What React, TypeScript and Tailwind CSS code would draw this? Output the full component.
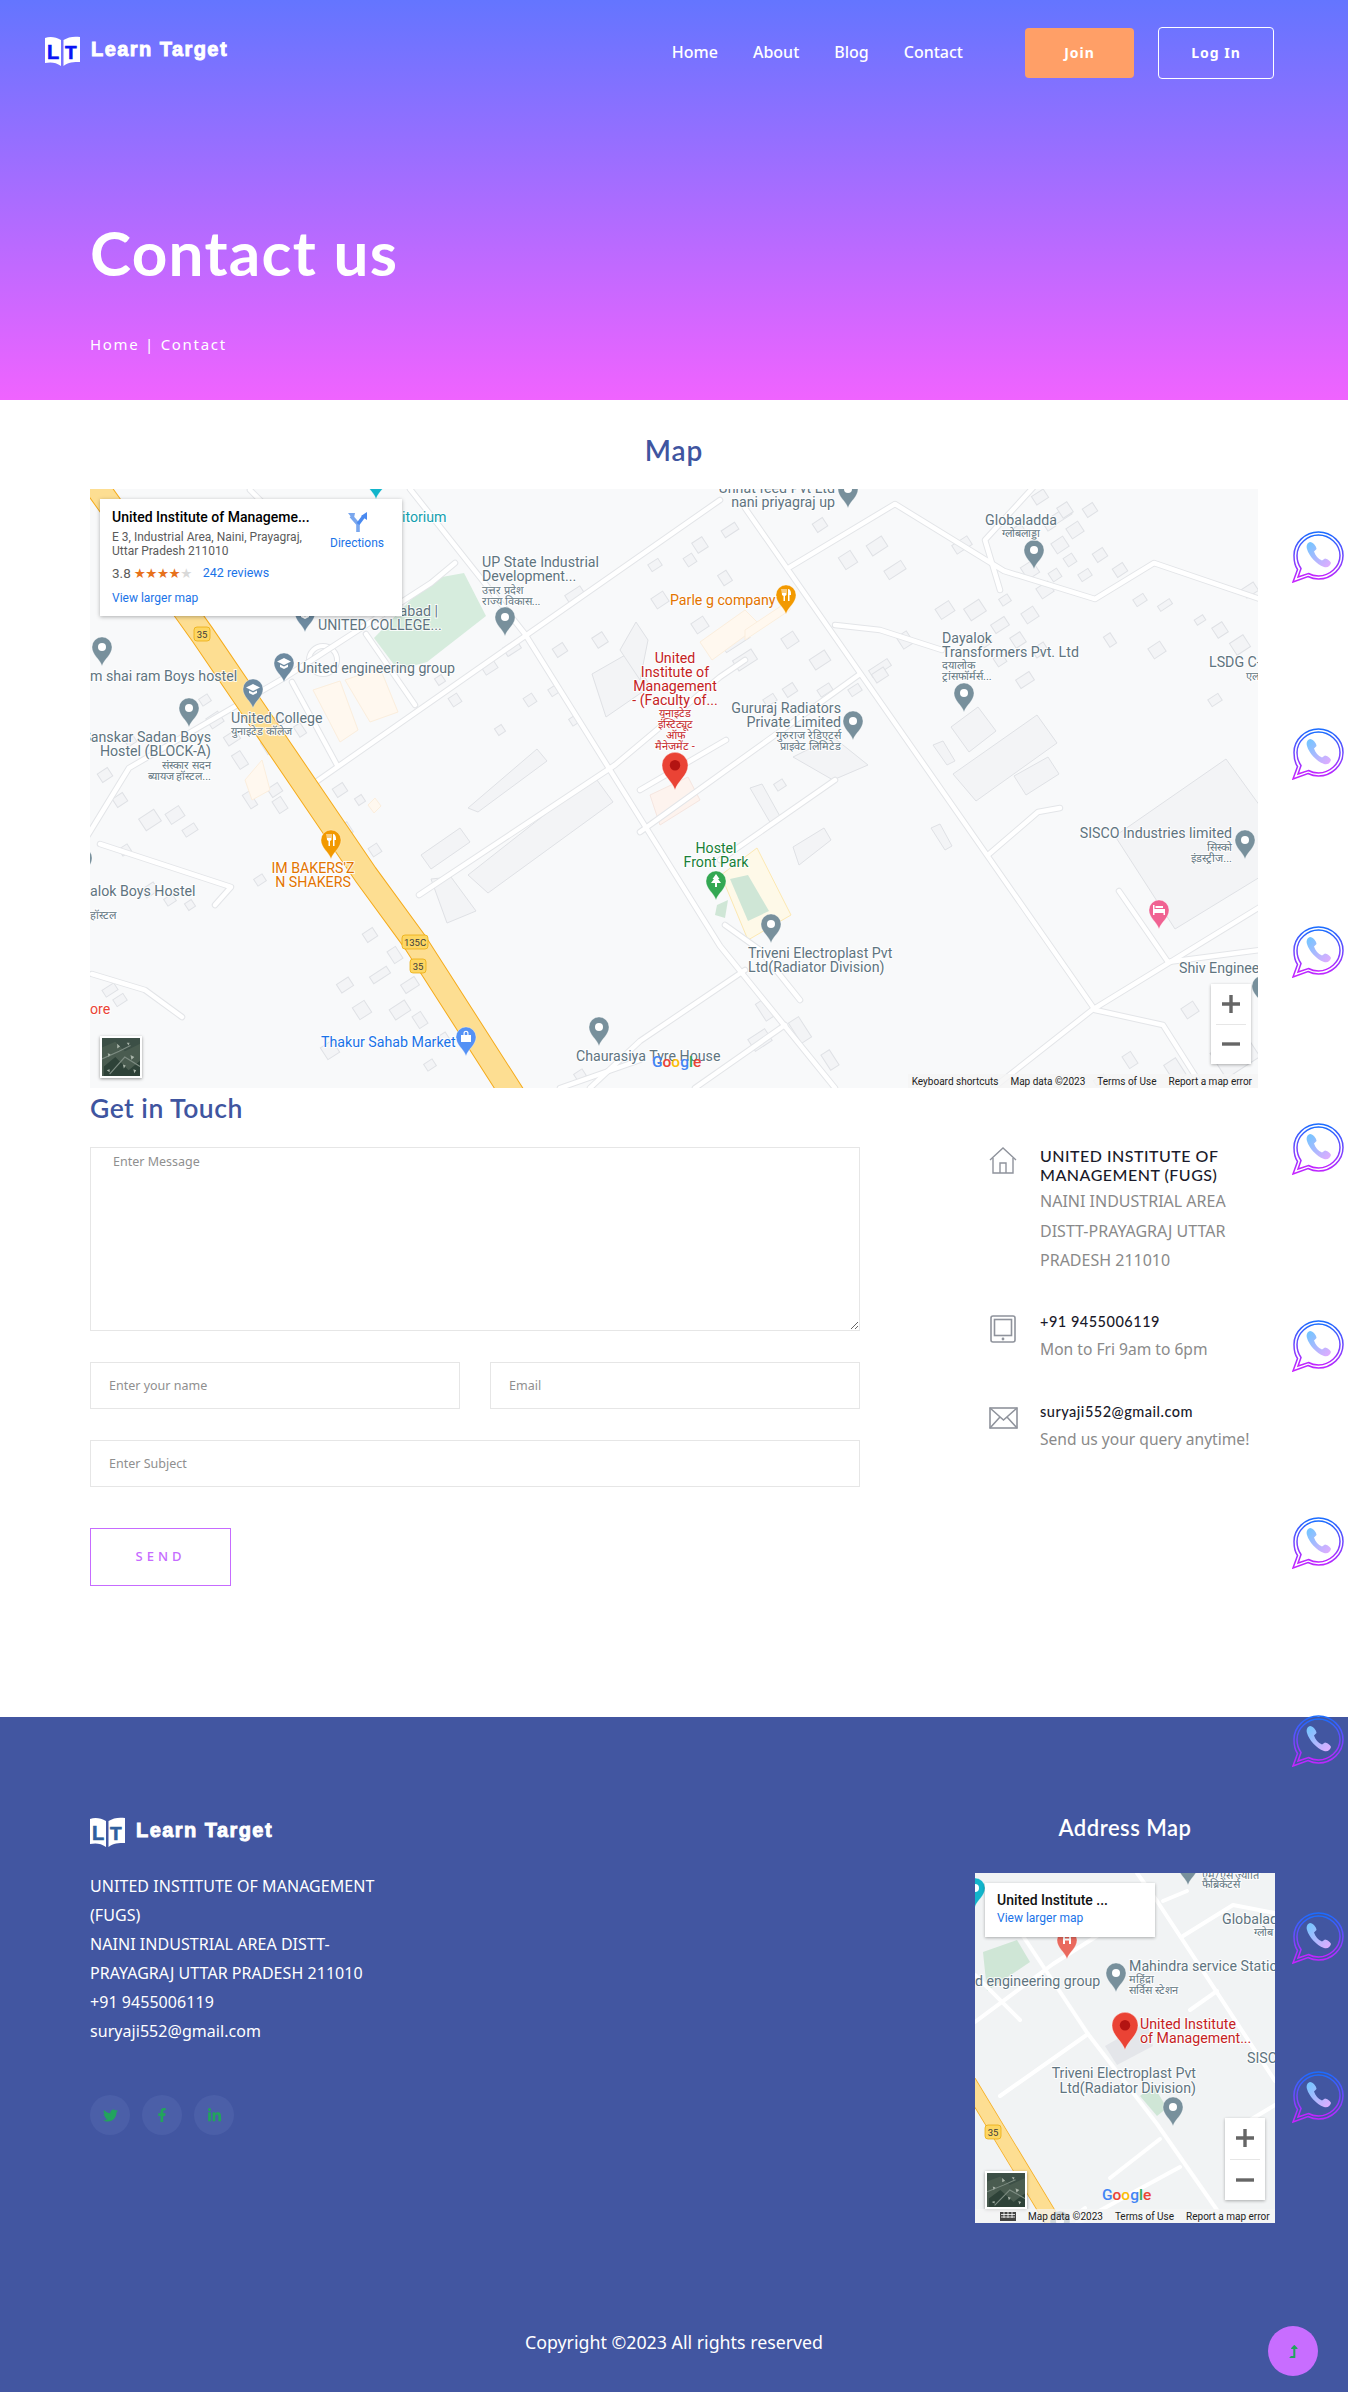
import React from "react";
import { FaTwitter, FaFacebookF, FaLinkedinIn, FaLevelUpAlt } from "react-icons/fa";

const muli = "[font-family:'Noto_Sans',sans-serif]";
const head = "[font-family:Lato,sans-serif]";
const roboto = "[font-family:Roboto,sans-serif]";

type P = [number, number];
const pts = (a: P[]) => a.map((p) => p.join(",")).join(" ");

function Pin({ x, y, c = "#78909c", big = false, dot = "#fff", g = "" }: { x: number; y: number; c?: string; big?: boolean; dot?: string; g?: string }) {
  const s = big ? 1.3 : 1;
  return (
    <g transform={`translate(${x} ${y}) scale(${s})`}>
      <path d="M0 0C-2-7-10-11-10-19A10 10 0 0 1 10-19C10-11 2-7 0 0Z" fill={c} stroke="#fff" strokeOpacity="0.5" strokeWidth="0.6" />
      {g ? <path d={g} fill="#fff" /> : <circle cx="0" cy="-19" r="4" fill={dot} />}
    </g>
  );
}

const gFork = "M-4.500-25h1v4h1v-4h1v4h1v-4h1v6l-1.500 1V-13h-1.500v-5l-1.500-1ZM2-25c2 0 3 2 3 5v1H3.500v6H2Z";
const gCap = "M0-24L7-20.500L0-17L-7-20.500ZM-4-17.500L0-15.500L4-17.500V-15L0-13L-4-15Z";
const gTree = "M0-26L3.500-21H2L5-17H1V-13H-1V-17H-5L-2-21H-3.500Z";
const gBed = "M-6-24H-4.500V-20H6V-14H4.500V-16H-4.500V-14H-6ZM-3.500-23H4V-21H-3.500Z";
const gBag = "M-5-21H5V-14H-5ZM-2.500-21V-23C-2.500-26 2.500-26 2.500-23V-21H1.300V-23C1.300-24.500-1.300-24.500-1.300-23V-21Z";
const gH = "M-4-24H-2V-20.500H2V-24H4V-15H2V-18.500H-2V-15H-4Z";

function Label({ x, y, t, c = "#5f7480", s = 14.2, a = "start", w = 400 }: { x: number; y: number; t: string; c?: string; s?: number; a?: "start" | "middle" | "end"; w?: number }) {
  return (
    <text x={x} y={y} fill={c} fontSize={s} fontWeight={w} textAnchor={a} stroke="#fff" strokeWidth="2" strokeOpacity="0.85" className="[paint-order:stroke]">
      {t}
    </text>
  );
}

function Shield({ x, y, t, wide = false }: { x: number; y: number; t: string; wide?: boolean }) {
  const w = wide ? 26 : 16;
  return (
    <g>
      <rect x={x - w / 2} y={y - 7} width={w} height={14} rx="3" fill="#fdd663" stroke="#e8a800" strokeWidth="0.7" />
      <text x={x} y={y + 3.5} fontSize="9.5" fill="#3c3c3c" textAnchor="middle">{t}</text>
    </g>
  );
}

const roads1: P[][] = [
  [[745, 508], [1095, 1010], [1163, 1025], [1203, 1088]],
  [[410, 489], [525, 634], [720, 946], [835, 1088]],
  [[313, 784], [720, 500]],
  [[790, 567], [895, 504], [1004, 571], [1095, 599], [1154, 563], [1260, 599]],
  [[419, 895], [615, 765], [720, 677], [745, 660]],
  [[640, 832], [860, 674]],
  [[640, 790], [726, 740]],
  [[988, 855], [1038, 812], [1060, 808]],
  [[993, 1088], [1092, 1010], [1260, 907]],
  [[1119, 891], [1168, 962], [1260, 950]],
  [[745, 970], [640, 1041], [590, 1088]],
  [[785, 1025], [695, 1088]],
  [[100, 844], [231, 887], [215, 905]],
  [[88, 835], [129, 768], [284, 678], [431, 583], [455, 563]],
  [[92, 974], [145, 990], [182, 1017]],
  [[366, 634], [415, 705]],
  [[292, 682], [337, 765]],
  [[835, 625], [880, 630], [942, 650]],
  [[1000, 590], [985, 540], [1040, 480]],
  [[640, 1060], [560, 1088]],
  [[250, 490], [280, 520], [320, 610]],
  [[835, 780], [720, 860]],
  [[725, 925], [760, 950], [800, 1000]],
];

const blds1: P[][] = [
  [[1115, 836], [1226, 759], [1260, 806], [1260, 877], [1175, 929]],
  [[951, 727], [978, 707], [996, 731], [969, 752]],
  [[953, 774], [1037, 715], [1057, 743], [976, 801]],
  [[1014, 776], [1048, 757], [1059, 774], [1026, 795]],
  [[933, 745], [943, 741], [955, 761], [947, 765]],
  [[931, 828], [940, 824], [952, 846], [945, 850]],
  [[793, 757], [833, 737], [868, 765], [833, 780]],
  [[750, 788], [762, 784], [782, 820], [771, 824]],
  [[793, 847], [824, 828], [831, 840], [799, 865]],
  [[468, 808], [537, 749], [547, 761], [478, 812]],
  [[468, 875], [594, 776], [613, 802], [488, 893]],
  [[421, 855], [460, 828], [470, 842], [431, 869]],
  [[431, 879], [451, 877], [476, 911], [447, 923]],
  [[592, 674], [627, 654], [651, 686], [606, 717]],
  [[636, 622], [648, 640], [640, 680], [620, 650]],
];

const small: [number, number, number, number][] = [
  [1040, 497, 14, 10], [1062, 515, 18, 9], [962, 545, 18, 10], [877, 546, 18, 12], [895, 570, 20, 10],
  [820, 525, 12, 10], [848, 560, 14, 14], [975, 610, 18, 14], [1000, 625, 16, 10], [1030, 615, 14, 12],
  [1065, 510, 12, 12], [1075, 530, 14, 12], [1090, 510, 12, 10], [1100, 555, 12, 10], [1120, 570, 12, 10],
  [1060, 545, 14, 12], [1045, 590, 14, 12], [1030, 570, 14, 14], [1018, 640, 12, 12],
  [1040, 650, 14, 10], [1157, 650, 14, 12], [1240, 645, 16, 14], [1220, 630, 12, 12], [1140, 600, 12, 8],
  [1165, 605, 14, 6], [880, 668, 22, 8], [880, 675, 14, 10], [820, 660, 18, 12], [790, 640, 14, 12],
  [735, 640, 28, 12], [745, 660, 22, 12], [700, 625, 14, 12], [780, 785, 10, 8], [945, 610, 16, 12],
  [725, 578, 10, 12], [730, 530, 16, 8], [700, 545, 12, 12], [660, 600, 14, 12], [600, 640, 12, 12],
  [575, 595, 18, 10], [560, 650, 12, 10], [512, 648, 16, 10], [490, 668, 14, 8],
  [150, 820, 18, 14], [175, 815, 16, 12], [120, 800, 12, 10], [105, 775, 12, 10], [190, 830, 14, 8],
  [232, 738, 14, 10], [215, 720, 14, 12], [270, 745, 14, 14], [240, 760, 10, 16], [275, 790, 12, 10],
  [250, 800, 8, 16], [280, 805, 10, 14], [300, 780, 12, 12], [340, 790, 12, 10], [360, 800, 8, 8],
  [395, 955, 10, 14], [370, 935, 12, 10], [380, 975, 20, 8], [410, 985, 16, 10], [345, 985, 14, 10],
  [362, 1010, 14, 14], [420, 1020, 10, 14], [442, 1040, 14, 10], [400, 1010, 18, 12], [330, 1050, 14, 14],
  [430, 1065, 10, 8], [580, 1075, 10, 8], [110, 990, 14, 8], [120, 1000, 12, 8],
  [150, 890, 14, 10], [170, 900, 10, 8], [260, 880, 10, 8], [190, 905, 8, 8], [800, 1030, 12, 24],
  [765, 1010, 10, 20], [830, 1060, 10, 18], [1130, 1060, 10, 14], [1190, 1010, 14, 12], [1100, 1080, 12, 6],
  [1235, 1055, 40, 30], [1175, 1070, 14, 20], [760, 1040, 20, 14],
  [1050, 525, 10, 8], [1070, 560, 10, 10], [1085, 575, 12, 8], [1055, 575, 10, 10], [1020, 530, 8, 10],
  [1005, 600, 10, 8], [985, 640, 10, 12], [1000, 660, 10, 10], [1025, 680, 16, 10], [905, 640, 12, 14],
  [855, 690, 12, 8], [825, 690, 14, 8], [790, 690, 12, 10], [770, 700, 12, 8], [1215, 700, 12, 8],
  [1110, 640, 8, 12], [1200, 620, 10, 6], [1250, 590, 14, 10], [690, 560, 10, 10], [655, 565, 12, 8],
  [130, 740, 10, 10], [125, 850, 10, 8], [205, 700, 10, 8], [280, 720, 10, 10], [300, 730, 8, 12],
  [320, 800, 8, 10], [345, 830, 12, 12], [375, 850, 10, 10], [455, 700, 10, 10], [440, 680, 8, 8],
  [530, 700, 10, 10], [500, 730, 8, 8], [575, 720, 10, 8], [555, 690, 12, 8],
];

const cream: P[][] = [
  [[313, 690], [340, 681], [358, 730], [340, 742]],
  [[345, 680], [380, 668], [398, 712], [370, 722]],
  [[245, 780], [262, 760], [270, 790], [252, 800]],
  [[368, 805], [375, 798], [381, 806], [374, 813]],
  [[700, 642], [745, 610], [760, 625], [712, 660]],
  [[745, 640], [790, 610], [790, 600], [745, 630]],
];

function Zoomer({ cls }: { cls: string }) {
  return (
    <div className={`absolute bg-white shadow-[0_1px_3px_rgba(0,0,0,0.3)] flex flex-col items-center justify-between ${cls}`}>
      <div className="flex-1 flex items-center justify-center w-full">
        <svg width="18" height="18" viewBox="0 0 18 18"><path d="M9 0V18M0 9H18" stroke="#666" strokeWidth="3.4" /></svg>
      </div>
      <div className="w-[30px] h-px bg-[#e6e6e6]" />
      <div className="flex-1 flex items-center justify-center w-full">
        <svg width="18" height="18" viewBox="0 0 18 18"><path d="M0 9H18" stroke="#666" strokeWidth="3.4" /></svg>
      </div>
    </div>
  );
}

function Sat({ cls }: { cls: string }) {
  return (
    <div className={`absolute border-2 border-white shadow-[0_1px_3px_rgba(0,0,0,0.4)] ${cls}`}>
      <svg width="100%" height="100%" viewBox="0 0 40 40" preserveAspectRatio="none" className="block">
        <rect width="40" height="40" fill="#4a5c50" />
        <path d="M0 10L14 4L24 14L40 6V0H0Z" fill="#3c4f46" />
        <path d="M2 30L14 20L28 34L40 24V40H2Z" fill="#2e4238" />
        <path d="M0 22L18 14L30 8M8 38L24 20L40 30" stroke="#7d8c82" strokeWidth="1.2" fill="none" />
        <path d="M16 6l3 3-3 2zM30 18l4 2-3 3zM6 16l3 1-2 3zM22 28l3 1-2 3zM33 33l3 1-2 3zM5 34l3-1 0 3zM26 5l3 0-1 3z" fill="#a9b4a9" />
      </svg>
    </div>
  );
}

function GoogleMark({ cls }: { cls: string }) {
  return (
    <div className={`absolute ${roboto} font-medium text-[15.5px] leading-none ${cls}`}>
      <span className="text-[#4285f4]">G</span>
      <span className="text-[#ea4335]">o</span>
      <span className="text-[#fbbc05]">o</span>
      <span className="text-[#4285f4]">g</span>
      <span className="text-[#34a853]">l</span>
      <span className="text-[#ea4335]">e</span>
    </div>
  );
}

function MainMap() {
  return (
    <div className="relative mx-[90px] h-[599px] bg-[#f8f9fa] overflow-hidden">
      <svg viewBox="90 489 1170 599" width="1170" height="599" className={`block ${roboto}`}>
        {blds1.map((b, i) => (
          <polygon key={i} points={pts(b)} fill="#f3f4f6" stroke="#dfe1e5" strokeWidth="1" />
        ))}
        {small.map(([x, y, w, h], i) => (
          <rect key={i} x={x - w / 2} y={y - h / 2} width={w} height={h} transform={`rotate(-33 ${x} ${y})`} fill="#f3f4f6" stroke="#dfe1e5" strokeWidth="1" />
        ))}
        <polygon points={pts([[374, 638], [431, 579], [464, 573], [486, 616], [427, 662], [398, 670]])} fill="#d6ecdd" />
        <polygon points={pts([[721, 875], [757, 848], [791, 915], [748, 940]])} fill="#fef9e8" stroke="#fce8b2" />
        <polygon points={pts([[730, 879], [748, 875], [769, 911], [748, 921]])} fill="#cfe6d6" />
        <polygon points={pts([[717, 905], [728, 900], [725, 918], [715, 915]])} fill="#cfe6d6" />
        <polygon points={pts([[650, 795], [688, 777], [700, 800], [660, 825]])} fill="#fdf3ee" stroke="#f5e6e0" />
        {cream.map((b, i) => (
          <polygon key={i} points={pts(b)} fill="#fff8ef" stroke="#fbeedd" />
        ))}
        <circle cx="323" cy="660" r="14" fill="none" stroke="#e3e5e8" strokeWidth="6" />
        <circle cx="323" cy="660" r="14" fill="none" stroke="#fff" strokeWidth="4" />
        {roads1.map((r, i) => (
          <polyline key={`o${i}`} points={pts(r)} fill="none" stroke="#e3e5e8" strokeWidth="6.5" strokeLinecap="round" strokeLinejoin="round" />
        ))}
        {roads1.map((r, i) => (
          <polyline key={`r${i}`} points={pts(r)} fill="none" stroke="#fff" strokeWidth="4.500" strokeLinecap="round" strokeLinejoin="round" />
        ))}
        <polyline points="92,480 202,634 366,875 415,942 513,1095" fill="none" stroke="#f5ab1c" strokeWidth="25" />
        <polyline points="92,480 202,634 366,875 415,942 513,1095" fill="none" stroke="#fdde92" strokeWidth="23" />
        <Shield x={202} y={634} t="35" />
        <Shield x={415} y={942} t="135C" wide />
        <Shield x={418} y={966} t="35" />

        <Pin x={376} y={499} c="#12b5cb" />
        <Pin x={505} y={636} />
        <Pin x={102} y={666} />
        <Pin x={189} y={727} />
        <Pin x={253} y={708} c="#6d8aa0" g={gCap} />
        <Pin x={284} y={682} c="#6d8aa0" g={gCap} />
        <Pin x={305} y={632} c="#6d8aa0" g={gCap} />
        <Pin x={331} y={859} c="#f29900" g={gFork} />
        <Pin x={82} y={877} />
        <Pin x={466} y={1056} c="#5491f5" g={gBag} />
        <Pin x={599} y={1046} />
        <Pin x={786} y={614} c="#f29900" g={gFork} />
        <Pin x={848} y={508} />
        <Pin x={1034} y={569} />
        <Pin x={964} y={712} />
        <Pin x={853} y={740} />
        <Pin x={716} y={900} c="#34a853" g={gTree} />
        <Pin x={771} y={943} />
        <Pin x={1245} y={859} />
        <Pin x={1159} y={929} c="#f06292" g={gBed} />
        <Pin x={1262} y={1005} />
        <Pin x={675} y={790} c="#ea4335" big dot="#b31412" />

        <Label x={402} y={522} t="itorium" c="#129eaf" />
        <Label x={482} y={567} t="UP State Industrial" />
        <Label x={482} y={581} t="Development..." />
        <Label x={482} y={594} t="उत्तर प्रदेश" s={11} />
        <Label x={482} y={605} t="राज्य विकास..." s={11} />
        <Label x={670} y={605} t="Parle g company" c="#e37400" />
        <Label x={318} y={616} t="UCEM - Allahabad |" />
        <Label x={318} y={630} t="UNITED COLLEGE..." />
        <Label x={297} y={673} t="United engineering group" />
        <Label x={90} y={681} t="m shai ram Boys hostel" />
        <Label x={231} y={723} t="United College" />
        <Label x={231} y={735} t="युनाइटेड कॉलेज" s={11} />
        <Label x={211} y={742} t="Sanskar Sadan Boys" a="end" />
        <Label x={211} y={756} t="Hostel (BLOCK-A)" a="end" />
        <Label x={211} y={769} t="संस्कार सदन" s={11} a="end" />
        <Label x={211} y={780} t="ब्यायज हॉस्टल..." s={11} a="end" />
        <Label x={313} y={873} t="IM BAKERS'Z" c="#e37400" a="middle" />
        <Label x={313} y={887} t="N SHAKERS" c="#e37400" a="middle" />
        <Label x={90} y={896} t="alok Boys Hostel" />
        <Label x={90} y={919} t="हॉस्टल" s={11} />
        <Label x={90} y={1014} t="ore" c="#ea4335" />
        <Label x={321} y={1047} t="Thakur Sahab Market" c="#1a73e8" />
        <Label x={576} y={1061} t="Chaurasiya Tyre House" />
        <Label x={675} y={663} t="United" c="#c5221f" a="middle" />
        <Label x={675} y={677} t="Institute of" c="#c5221f" a="middle" />
        <Label x={675} y={691} t="Management" c="#c5221f" a="middle" />
        <Label x={675} y={705} t="- (Faculty of..." c="#c5221f" a="middle" />
        <Label x={675} y={717} t="यूनाइटेड" c="#c5221f" s={11} a="middle" />
        <Label x={675} y={728} t="इंस्टिट्यूट" c="#c5221f" s={11} a="middle" />
        <Label x={675} y={739} t="ऑफ" c="#c5221f" s={11} a="middle" />
        <Label x={675} y={750} t="मैनेजमेंट -" c="#c5221f" s={11} a="middle" />
        <Label x={716} y={853} t="Hostel" c="#188038" a="middle" />
        <Label x={716} y={867} t="Front Park" c="#188038" a="middle" />
        <Label x={835} y={493} t="Unnat feed Pvt Ltd" a="end" />
        <Label x={835} y={507} t="nani priyagraj up" a="end" />
        <Label x={1021} y={525} t="Globaladda" a="middle" />
        <Label x={1021} y={537} t="ग्लोबलाड्डा" s={11} a="middle" />
        <Label x={942} y={643} t="Dayalok" />
        <Label x={942} y={657} t="Transformers Pvt. Ltd" />
        <Label x={942} y={669} t="दयालोक" s={11} />
        <Label x={942} y={680} t="ट्रांसफॉर्मर्स..." s={11} />
        <Label x={841} y={713} t="Gururaj Radiators" a="end" />
        <Label x={841} y={727} t="Private Limited" a="end" />
        <Label x={841} y={739} t="गुरुराज रेडिएटर्स" s={11} a="end" />
        <Label x={841} y={750} t="प्राइवेट लिमिटेड" s={11} a="end" />
        <Label x={748} y={958} t="Triveni Electroplast Pvt" />
        <Label x={748} y={972} t="Ltd(Radiator Division)" />
        <Label x={1232} y={838} t="SISCO Industries limited" a="end" />
        <Label x={1232} y={851} t="सिस्को" s={11} a="end" />
        <Label x={1232} y={862} t="इंडस्ट्रीज..." s={11} a="end" />
        <Label x={1209} y={667} t="LSDG C-" />
        <Label x={1246} y={680} t="एल" s={11} />
        <Label x={1179} y={973} t="Shiv Engineer" />
      </svg>

      <div className={`absolute left-[10px] top-[10px] w-[302px] h-[117px] bg-white shadow-[0_1px_4px_rgba(0,0,0,0.3)] ${roboto}`}>
        <div className="absolute left-[12px] top-[8px] text-[14px] leading-[20px] font-medium text-black whitespace-nowrap">United Institute of Manageme...</div>
        <div className="absolute left-[12px] top-[31px] text-[12px] leading-[14px] text-[#5b5b5b] whitespace-nowrap">
          E 3, Industrial Area, Naini, Prayagraj,<br />Uttar Pradesh 211010
        </div>
        <div className="absolute left-[12px] top-[66px] h-[16px] flex items-center text-[13.5px] text-[#5b5b5b] whitespace-nowrap">
          3.8
          <span className="ml-[3px] text-[13.5px] tracking-[-0.5px] text-[#e7711b] [font-family:'DejaVu_Sans',sans-serif]">★★★★<span className="text-[#d9d9d9]">★</span></span>
          <span className="ml-[11px] text-[12.5px] text-[#1a73e8]">242 reviews</span>
        </div>
        <div className="absolute left-[12px] top-[91px] text-[12px] leading-[16px] text-[#1a73e8] whitespace-nowrap">View larger map</div>
        <div className="absolute left-[230px] top-[12px] w-[54px] flex flex-col items-center">
          <svg width="22" height="22" viewBox="0 0 22 22">
            <path d="M12 21V13L5 5" fill="none" stroke="#7aa7ee" strokeWidth="3.6" />
            <path d="M2 2h7l-1.500 7z" fill="#7aa7ee" />
            <path d="M12 13L18 5" fill="none" stroke="#4a8af0" strokeWidth="3.6" />
            <path d="M21 1v8l-6-4z" fill="#4a8af0" />
          </svg>
          <span className="mt-[3px] text-[12px] leading-[14px] text-[#1a73e8]">Directions</span>
        </div>
      </div>
      <Sat cls="left-[10px] top-[547px] w-[42px] h-[42px]" />
      <Zoomer cls="left-[1121px] top-[495px] w-[40px] h-[80px]" />
      <GoogleMark cls="left-[562px] top-[566px]" />
      <div className={`absolute right-0 bottom-0 h-[14px] pl-[4px] pr-[6px] bg-[rgba(245,245,245,0.8)] flex items-center gap-[12px] text-[10px] text-[#222] whitespace-nowrap ${roboto}`}>
        <span>Keyboard shortcuts</span>
        <span>Map data ©2023</span>
        <span>Terms of Use</span>
        <span>Report a map error</span>
      </div>
    </div>
  );
}

function SmallMap() {
  const rs: P[][] = [
    [[1137, 1873], [1157, 1901], [1275, 2081]],
    [[975, 2022], [1053, 1964], [1097, 1936]],
    [[1000, 2096], [1088, 2034]],
    [[1023, 1936], [1088, 2034], [1157, 2124], [1217, 2210]],
    [[1160, 2139], [1110, 2178]],
    [[1180, 2167], [1077, 2223]],
    [[1183, 1936], [1233, 1905], [1275, 1913]],
    [[1190, 2010], [1217, 1991]],
    [[1163, 1901], [1187, 1891]],
    [[975, 1975], [1020, 2020]],
    [[1250, 2120], [1275, 2105]],
    [[1085, 2208], [1065, 2223]],
  ];
  return (
    <div className="relative w-[300px] h-[350px] mt-[34px] bg-[#f1f3f4] overflow-hidden">
      <svg viewBox="975 1873 300 350" width="300" height="350" className={`block ${roboto}`}>
        <polygon points={pts([[983, 1952], [1017, 1940], [1030, 1962], [987, 1991]])} fill="#cfe6d6" />
        <polygon points={pts([[1140, 2096], [1153, 2085], [1167, 2108], [1157, 2116]])} fill="#cfe6d6" />
        <polygon points={pts([[1105, 2046], [1147, 2022], [1153, 2046], [1117, 2065]])} fill="#e4e6ea" />
        {rs.map((r, i) => (
          <polyline key={i} points={pts(r)} fill="none" stroke="#fff" strokeWidth="4" strokeLinecap="round" strokeLinejoin="round" />
        ))}
        <polyline points="960,2068 1058,2230" fill="none" stroke="#f5ab1c" strokeWidth="16" />
        <polyline points="960,2068 1058,2230" fill="none" stroke="#fdde92" strokeWidth="14.500" />
        <Shield x={993} y={2132} t="35" />
        <Pin x={1116} y={1992} />
        <Pin x={1173} y={2126} />
        <Pin x={1188} y={1885} />
        <Pin x={975} y={1907} c="#12b5cb" />
        <Pin x={1067} y={1959} c="#ea6a5e" g={gH} />
        <Pin x={1060} y={2240} />
        <Pin x={1125} y={2050} c="#ea4335" big dot="#b31412" />
        <Label x={1202} y={1879} t="एम/एस ज्योति" s={11} />
        <Label x={1202} y={1888} t="फैब्रिकेटर्स" s={11} />
        <Label x={1222} y={1924} t="Globalad" />
        <Label x={1254} y={1936} t="ग्लोब" s={11} />
        <Label x={975} y={1986} t="d engineering group" />
        <Label x={1129} y={1971} t="Mahindra service Statio" />
        <Label x={1129} y={1983} t="महिंद्रा" s={11} />
        <Label x={1129} y={1994} t="सर्विस स्टेशन" s={11} />
        <Label x={1140} y={2029} t="United Institute" c="#c5221f" />
        <Label x={1140} y={2043} t="of Management..." c="#c5221f" />
        <Label x={1247} y={2063} t="SISC" />
        <Label x={1196} y={2078} t="Triveni Electroplast Pvt" a="end" />
        <Label x={1196} y={2093} t="Ltd(Radiator Division)" a="end" />
      </svg>
      <div className={`absolute left-[10px] top-[10px] w-[170px] h-[54px] bg-white shadow-[0_1px_3px_rgba(0,0,0,0.3)] pl-[12px] pt-[8px] ${roboto}`}>
        <div className="text-[14px] leading-[19px] font-medium text-[#111] whitespace-nowrap">United Institute ...</div>
        <div className="text-[12px] leading-[17px] text-[#1a73e8] whitespace-nowrap">View larger map</div>
      </div>
      <Sat cls="left-[10px] top-[298px] w-[42px] h-[38px]" />
      <Zoomer cls="left-[250px] top-[245px] w-[40px] h-[82px]" />
      <GoogleMark cls="left-[127px] top-[315px]" />
      <div className={`absolute right-0 bottom-0 h-[14px] left-[0px] pl-[53px] flex items-center gap-[12px] bg-[rgba(245,245,245,0.7)] text-[10px] text-[#222] whitespace-nowrap ${roboto}`}>
        <span>Map data ©2023</span>
        <span>Terms of Use</span>
        <span>Report a map error</span>
      </div>
      <svg className="absolute left-[25px] top-[339px]" width="16" height="9" viewBox="0 0 16 9">
        <rect width="16" height="9" fill="#444" />
        <path d="M1 2.500H15M1 5H15M4 0V6M8 0V6M12 0V6" stroke="#fff" strokeWidth="0.8" />
      </svg>
    </div>
  );
}

function Logo({ letter, id }: { letter: string; id: string }) {
  return (
    <svg width="35" height="30" viewBox="0 0 35 30" aria-label={id}>
      <path d="M0 2C5 0 11 1 16 4V30C11 26 5 26 0 27Z" fill="#fff" />
      <path d="M35 1C29 0 23 1 18.500 4V30C23 26 29 26 35 26Z" fill="#fff" />
      <text x="2" y="22.500" fontSize="20" fontWeight="900" fill={letter} stroke={letter} strokeWidth="0.6" className="[font-family:'Liberation_Sans',sans-serif]">L</text>
      <text x="20" y="22.500" fontSize="19" fontWeight="900" fill={letter} stroke={letter} strokeWidth="0.6" className="[font-family:'Liberation_Sans',sans-serif]">T</text>
    </svg>
  );
}

const Brand = ({ color, cls }: { color: string; cls: string }) => (
  <div className={`flex items-start ${cls}`}>
    <Logo letter={color} id="Learn Target logo" />
    <span className="ml-[11px] mt-[1px] text-[20px] leading-[24px] font-bold text-white tracking-[1.45px] [-webkit-text-stroke:0.9px_white] [font-family:'Liberation_Sans',sans-serif] whitespace-nowrap">Learn Target</span>
  </div>
);

function Whats({ cls, id }: { cls: string; id: number }) {
  return (
    <svg className={`absolute ${cls}`} width="52" height="52" viewBox="0 0 52 52">
      <defs>
        <linearGradient id={`wg${id}`} x1="0" y1="0" x2="0" y2="1">
          <stop offset="0" stopColor="#1a6dff" />
          <stop offset="1" stopColor="#c822ff" />
        </linearGradient>
        <linearGradient id={`wp${id}`} x1="0" y1="0" x2="1" y2="1">
          <stop offset="0" stopColor="#6dc7ff" />
          <stop offset="1" stopColor="#e6abff" />
        </linearGradient>
      </defs>
      <path d="M26.500 1C39.500 1 51 11.500 51 24.500C51 37.500 39.500 48 26.500 48C22.500 48 19 47 16 45.500L1 51L5.500 38.500C3 35 2 30 2 24.500C2 11.500 13.500 1 26.500 1Z" fill="none" stroke={`url(#wg${id})`} strokeWidth="1.5" />
      <path d="M26.500 4C37.500 4 48 13 48 24.500C48 36 37.500 45 26.500 45C22.500 45 19 44 16.500 42.500L6 46L9 37.500C6.500 34 5 29.500 5 24.500C5 13 15.500 4 26.500 4Z" fill="none" stroke={`url(#wg${id})`} strokeWidth="1.5" />
      <path d="M18 11C15 12 14 15 15 18C17 25 24 33 32 36C36 37 38 35 39 32C39 30.500 35 27.500 33 27.500L30 29.500C26 28 23.500 24.500 22 20.500L24.500 18C24.500 15.500 21 11 18 11Z" fill={`url(#wp${id})`} />
    </svg>
  );
}

function Info({ icon, title, sub, cls, titleCls }: { icon: React.ReactNode; title: React.ReactNode; sub: React.ReactNode; cls: string; titleCls: string }) {
  return (
    <div className={`flex ${cls}`}>
      <div className="w-[51px] shrink-0">{icon}</div>
      <div>
        <div className={`text-[#1a1a2a] ${head} ${titleCls}`}>{title}</div>
        <div className={`text-[#8a8a8a] ${muli}`}>{sub}</div>
      </div>
    </div>
  );
}

const inputCls = `h-[47px] w-full border border-[#e6e6e6] px-[18px] text-[12.5px] outline-none placeholder:text-[#8f8f8f] ${muli}`;

const floats = [
  "left-[1292px] top-[531px]",
  "left-[1292px] top-[728px]",
  "left-[1292px] top-[926px]",
  "left-[1292px] top-[1123px]",
  "left-[1292px] top-[1320px]",
  "left-[1292px] top-[1517px]",
  "left-[1292px] top-[1715px]",
  "left-[1292px] top-[1912px]",
  "left-[1292px] top-[2071px]",
];

export default function App() {
  return (
    <div className="relative w-[1348px] h-[2392px] overflow-hidden bg-white">
      <header className="h-[400px] bg-[linear-gradient(180deg,#6475ff_0%,#f063ff_100%)] text-white">
        <nav className="h-[104px] flex items-center pl-[45px] pr-[74px]">
          <Brand color="#0a14f5" cls="mt-[-3px]" />
          <ul className={`ml-auto flex items-center gap-[35px] text-[16px] font-medium ${muli}`}>
            <li>Home</li>
            <li>About</li>
            <li>Blog</li>
            <li>Contact</li>
          </ul>
          <button className={`ml-[62px] mt-[1px] w-[109px] h-[50px] rounded-[4px] bg-[#ff9f67] text-[14px] font-bold tracking-[1px] ${muli}`}>Join</button>
          <button className={`ml-[24px] mt-[1px] w-[116px] h-[52px] rounded-[4px] border border-white text-[14px] font-bold tracking-[1px] ${muli}`}>Log In</button>
        </nav>
        <div className="pl-[90px]">
          <h1 className={`mt-[113px] text-[62px] leading-[70px] font-bold tracking-[1.3px] ${head}`}>Contact us</h1>
          <div className={`mt-[46px] text-[15px] leading-[22px] tracking-[1.7px] ${muli}`}>Home | Contact</div>
        </div>
      </header>

      <main className="pb-[131px]">
        <h2 className={`pt-[34px] h-[89px] text-center text-[28px] leading-[32px] font-semibold tracking-[1px] text-[#3f55a0] ${head}`}>Map</h2>
        <MainMap />
        <h2 className={`ml-[90px] text-[26.5px] leading-[40px] font-semibold tracking-[0.5px] text-[#3f55a0] ${head}`}>Get in Touch</h2>
        <div className="mt-[19px] flex pl-[90px]">
          <form className="w-[770px] shrink-0">
            <textarea placeholder="Enter Message" className={`block h-[184px] w-full border border-[#e6e6e6] px-[22px] py-[5px] text-[12.5px] outline-none placeholder:text-[#8f8f8f] ${muli}`} />
            <div className="mt-[31px] grid grid-cols-2 gap-[30px]">
              <input placeholder="Enter your name" className={inputCls} />
              <input placeholder="Email" className={inputCls} />
            </div>
            <input placeholder="Enter Subject" className={`mt-[31px] block ${inputCls}`} />
            <button type="button" className={`mt-[41px] block w-[141px] h-[58px] border border-[#c66bff] text-[13px] font-medium tracking-[4px] text-[#c66bff] ${muli}`}>SEND</button>
          </form>
          <div className="ml-[129px] w-[290px] shrink-0">
            <Info
              cls="items-start"
              titleCls="text-[16px] leading-[18.500px] tracking-[0.5px] font-medium"
              title={<>UNITED INSTITUTE OF<br />MANAGEMENT (FUGS)</>}
              sub={<div className="mt-[3px] text-[16px] leading-[29.5px]">NAINI INDUSTRIAL AREA<br />DISTT-PRAYAGRAJ UTTAR<br />PRADESH 211010</div>}
              icon={
                <svg width="28" height="28" viewBox="0 0 28 28" fill="none" stroke="#8f939c" strokeWidth="1.4">
                  <path d="M1 13L14 1L27 13" />
                  <path d="M4 11V26H24V11" />
                  <path d="M11 26V16H17V26" />
                </svg>
              }
            />
            <Info
              cls="mt-[37px] items-start"
              titleCls="text-[14.5px] leading-[18px] tracking-[0.5px] font-medium"
              title="+91 9455006119"
              sub={<div className="mt-[7px] text-[15.6px] leading-[22px]">Mon to Fri 9am to 6pm</div>}
              icon={
                <svg width="26" height="28" viewBox="0 0 26 28" fill="none" stroke="#8f939c" strokeWidth="1.6" className="ml-[1px] mt-[2px]">
                  <rect x="1" y="1" width="24" height="26" rx="2" />
                  <rect x="4.500" y="4.500" width="17" height="16" />
                  <circle cx="13" cy="24" r="0.6" />
                </svg>
              }
            />
            <Info
              cls="mt-[43px] items-start"
              titleCls="text-[14.5px] leading-[18px] tracking-[0.5px] font-medium"
              title="suryaji552@gmail.com"
              sub={<div className="mt-[7px] text-[15.6px] leading-[22px]">Send us your query anytime!</div>}
              icon={
                <svg width="29" height="22" viewBox="0 0 29 22" fill="none" stroke="#8f939c" strokeWidth="1.6" className="mt-[4px]">
                  <rect x="1" y="1" width="27" height="20" />
                  <path d="M1 1L14.500 13L28 1M1 21L11 10M28 21L18 10" />
                </svg>
              }
            />
          </div>
        </div>
      </main>

      <footer className="h-[675px] bg-[#4256a1] pt-[100px] text-white">
        <div className="h-[511px] flex justify-between pl-[90px] pr-[73px]">
          <div className="w-[320px]">
            <Brand color="#2f5f9e" cls="" />
            <p className={`mt-[25px] text-[16px] leading-[29px] tracking-[0.05px] ${muli}`}>
              UNITED INSTITUTE OF MANAGEMENT<br />(FUGS)<br />NAINI INDUSTRIAL AREA DISTT-<br />PRAYAGRAJ UTTAR PRADESH 211010<br />+91 9455006119<br />suryaji552@gmail.com
            </p>
            <div className="mt-[49px] flex gap-[12px] text-[#22a45d]">
              <span className="w-[40px] h-[40px] rounded-full bg-[#4b5fa8] flex items-center justify-center"><FaTwitter size={15} /></span>
              <span className="w-[40px] h-[40px] rounded-full bg-[#4b5fa8] flex items-center justify-center"><FaFacebookF size={14} /></span>
              <span className="w-[40px] h-[40px] rounded-full bg-[#4b5fa8] flex items-center justify-center"><FaLinkedinIn size={15} /></span>
            </div>
          </div>
          <div className="w-[300px]">
            <h3 className={`text-center text-[22px] leading-[22px] font-semibold tracking-[0.5px] ${head}`}>Address Map</h3>
            <SmallMap />
          </div>
        </div>
        <p className={`text-center text-[17.8px] leading-[28px] ${muli}`}>Copyright ©2023 All rights reserved</p>
      </footer>

      {floats.map((c, i) => (
        <Whats key={i} cls={c} id={i} />
      ))}
      <div className="absolute left-[1268px] top-[2326px] w-[50px] h-[50px] rounded-full bg-[#c86dff] flex items-center justify-center text-[#22a45d]">
        <FaLevelUpAlt size={13} />
      </div>
    </div>
  );
}
